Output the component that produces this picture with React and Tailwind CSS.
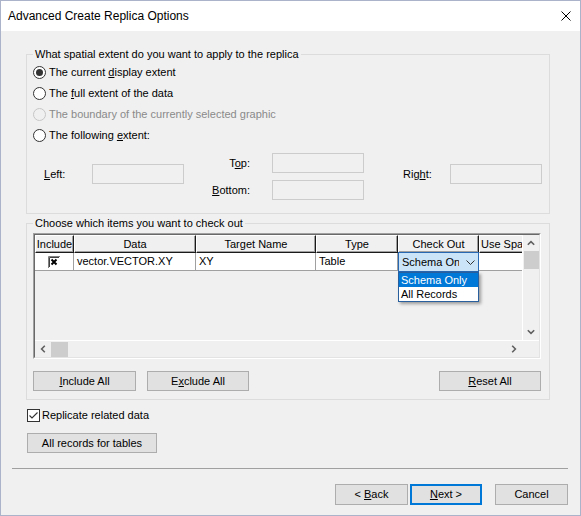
import React from 'react';

function Radio({ checked, disabled }) {
  const stroke = disabled ? '#c6c6c6' : '#333333';
  return (
    <svg width="13" height="13" viewBox="0 0 13 13" className="shrink-0">
      <circle cx="6.5" cy="6.5" r="6" fill={disabled ? 'none' : '#ffffff'} stroke={stroke} />
      {checked && <circle cx="6.5" cy="6.5" r="3.5" fill="#333333" />}
    </svg>
  );
}

function Chevron({ dir }) {
  const paths = {
    up: 'M0.8 4.8 4 1.6 7.2 4.8',
    down: 'M0.8 1.2 4 4.4 7.2 1.2',
    left: 'M4.8 0.8 1.6 4 4.8 7.2',
    right: 'M1.2 0.8 4.4 4 1.2 7.2',
  };
  const vertical = dir === 'up' || dir === 'down';
  return (
    <svg width={vertical ? 8 : 6} height={vertical ? 6 : 8} viewBox={vertical ? '0 0 8 6' : '0 0 6 8'}>
      <path d={paths[dir]} fill="none" stroke="#606060" strokeWidth="1.6" />
    </svg>
  );
}

function Field({ w = 'w-[92px]' }) {
  return <div className={`${w} h-[20px] border border-[#cccccc] bg-[#f0f0f0] shrink-0`} />;
}

function Button({ children, className = '' }) {
  return (
    <div className={`h-[20px] border border-[#adadad] bg-[#e1e1e1] flex items-center justify-center shrink-0 ${className}`}>
      <span className="whitespace-pre">{children}</span>
    </div>
  );
}

const headerCells = [
  { label: 'Include', cls: 'w-[39px] justify-center' },
  { label: 'Data', cls: 'w-[122px] justify-center' },
  { label: 'Target Name', cls: 'w-[120px] justify-center' },
  { label: 'Type', cls: 'w-[82px] justify-center' },
  { label: 'Check Out', cls: 'w-[81px] justify-center' },
  { label: 'Use Spatial Filter', cls: 'w-[120px] justify-start pl-[1px]' },
];

export default function App() {
  return (
    <div className="w-[581px] h-[516px] border border-[#aab3c9] bg-[#f0f0f0] flex flex-col font-['Liberation_Sans',Arial,sans-serif] text-[11px] text-black leading-none overflow-hidden">
      {/* title bar */}
      <div className="h-[30px] bg-white flex items-center pl-[7px] pr-[9px] shrink-0">
        <span className="text-[12px]">Advanced Create Replica Options</span>
        <svg className="ml-auto" width="10" height="10" viewBox="0 0 10 10">
          <path d="M0.5 0.5 9.5 9.5 M9.5 0.5 0.5 9.5" stroke="#000" strokeWidth="1" />
        </svg>
      </div>

      <div className="pl-[25px] flex flex-col items-start">
        {/* spatial extent */}
        <fieldset className="mt-[15px] w-[524px] border border-[#dcdcdc]">
          <legend className="ml-[6px] px-[2px] leading-[16px]">What spatial extent do you want to apply to the replica</legend>
          <div className="pl-[6px] pb-[13px]">
            <div className="h-[21px] flex items-center gap-[3px]">
              <Radio checked />
              <span>The current <span className="underline">d</span>isplay extent</span>
            </div>
            <div className="h-[21px] flex items-center gap-[3px]">
              <Radio />
              <span>The <span className="underline">f</span>ull extent of the data</span>
            </div>
            <div className="h-[21px] flex items-center gap-[3px] text-[#8a8a8a]">
              <Radio disabled />
              <span>The boundary of the currently selected graphic</span>
            </div>
            <div className="h-[21px] flex items-center gap-[3px]">
              <Radio />
              <span>The following <span className="underline">e</span>xtent:</span>
            </div>

            <div className="mt-[7px] flex items-start">
              <div className="mt-[11px] ml-[11px] flex items-center">
                <span className="w-[48px]"><span className="underline">L</span>eft:</span>
                <Field />
              </div>
              <div className="ml-[28px] grid grid-cols-[38px_92px] gap-x-[22px] gap-y-[7px] items-center">
                <span className="text-right">T<span className="underline">o</span>p:</span>
                <Field />
                <span className="text-right"><span className="underline">B</span>ottom:</span>
                <Field />
              </div>
              <div className="mt-[11px] ml-[39px] flex items-center">
                <span className="w-[47px]">Rig<span className="underline">h</span>t:</span>
                <Field />
              </div>
            </div>
          </div>
        </fieldset>

        {/* items to check out */}
        <fieldset className="mt-[1px] w-[524px] border border-[#dcdcdc]">
          <legend className="ml-[6px] px-[2px] leading-[16px]">Choose which items you want to check out</legend>
          <div className="pl-[6px] pt-[2px] pb-[8px]">
            <div className="w-[508px] h-[126px] border border-t-[#a0a0a0] border-l-[#a0a0a0] border-r-white border-b-white">
              <div className="h-full border border-t-[#696969] border-l-[#696969] border-r-[#e3e3e3] border-b-[#e3e3e3] flex flex-col bg-[#f0f0f0]">
                <div className="flex flex-1 min-h-0">
                  <div className="flex-1 min-w-0 overflow-hidden flex flex-col">
                    <div className="flex h-[18px] shrink-0">
                      {headerCells.map((c) => (
                        <div
                          key={c.label}
                          className={`${c.cls} shrink-0 flex items-center whitespace-nowrap overflow-hidden bg-[#f0f0f0] border border-t-white border-l-white border-r-[#1a1a1a] border-b-[#1a1a1a] shadow-[inset_-1px_-1px_0_#a0a0a0]`}
                        >
                          {c.label}
                        </div>
                      ))}
                    </div>
                    <div className="flex h-[18px] shrink-0">
                      <div className="w-[39px] shrink-0 bg-white border-r border-b border-[#a0a0a0] flex items-center justify-center">
                        <svg width="12" height="12" viewBox="0 0 12 12">
                          <rect x="0" y="0" width="12" height="12" fill="#ffffff" />
                          <path d="M0.5 12V0.5H12" stroke="#808080" fill="none" />
                          <path d="M1.5 11V1.5H11" stroke="#404040" fill="none" />
                          <path d="M3.5 3.5 8.5 8.5 M8.5 3.5 3.5 8.5" stroke="#000" strokeWidth="2" />
                        </svg>
                      </div>
                      <div className="w-[122px] shrink-0 bg-white border-r border-b border-[#a0a0a0] flex items-center pl-[3px]">vector.VECTOR.XY</div>
                      <div className="w-[120px] shrink-0 bg-white border-r border-b border-[#a0a0a0] flex items-center pl-[3px]">XY</div>
                      <div className="w-[82px] shrink-0 bg-white border-r border-b border-[#a0a0a0] flex items-center pl-[3px]">Table</div>
                      <div className="w-[81px] shrink-0 bg-white border-r border-b border-[#a0a0a0] relative">
                        <div className="absolute left-0 -top-[1px] w-[81px] h-[20px] border border-[#2867b2] bg-[#cce4f7] flex items-center pl-[3px] z-10">
                          <span className="w-[57px] overflow-hidden whitespace-nowrap">Schema Only</span>
                          <span className="ml-[7px]">
                            <svg width="9" height="5" viewBox="0 0 9 5">
                              <path d="M0.5 0.5 4.5 4.5 8.5 0.5" fill="none" stroke="#333333" />
                            </svg>
                          </span>
                        </div>
                        <div className="absolute left-0 top-[19px] w-[81px] border border-[#2a5f9e] bg-white shadow-[2px_2px_3px_rgba(0,0,0,0.35)] z-20">
                          <div className="h-[14px] bg-[#0078d7] text-white flex items-center pl-[2px]">Schema Only</div>
                          <div className="h-[14px] flex items-center pl-[2px]">All Records</div>
                        </div>
                      </div>
                      <div className="w-[120px] shrink-0 bg-white border-b border-[#a0a0a0]" />
                    </div>
                  </div>
                  {/* vertical scrollbar */}
                  <div className="w-[17px] shrink-0 flex flex-col border-l border-white">
                    <div className="h-[16px] flex items-center justify-center"><Chevron dir="up" /></div>
                    <div className="w-[15px] h-[18px] ml-[1px] bg-[#cdcdcd]" />
                    <div className="flex-1" />
                    <div className="h-[16px] flex items-center justify-center"><Chevron dir="down" /></div>
                  </div>
                </div>
                {/* horizontal scrollbar */}
                <div className="h-[17px] shrink-0 flex border-t border-white">
                  <div className="flex-1 flex items-center">
                    <div className="w-[16px] flex items-center justify-center"><Chevron dir="left" /></div>
                    <div className="w-[17px] h-[15px] bg-[#cdcdcd]" />
                    <div className="flex-1" />
                    <div className="w-[16px] flex items-center justify-center"><Chevron dir="right" /></div>
                  </div>
                  <div className="w-[17px] shrink-0" />
                </div>
              </div>
            </div>

            <div className="mt-[12px] flex pr-[8px]">
              <Button className="w-[103px]"><span className="underline">I</span>nclude All</Button>
              <Button className="w-[102px] ml-[11px]">E<span className="underline">x</span>clude All</Button>
              <Button className="w-[102px] ml-auto"><span className="underline">R</span>eset All</Button>
            </div>
          </div>
        </fieldset>

        <div className="mt-[9px] ml-[1px] flex items-center gap-[2px]">
          <svg width="13" height="13" viewBox="0 0 13 13">
            <rect x="0.5" y="0.5" width="12" height="12" fill="#ffffff" stroke="#333333" />
            <path d="M2.5 6.5 5 9 10.5 3.5" fill="none" stroke="#333333" strokeWidth="1.1" />
          </svg>
          <span>Replicate related data</span>
        </div>

        <Button className="mt-[11px] ml-[1px] w-[130px]">All records for tables</Button>
      </div>

      <div className="mt-[15px] ml-[11px] mr-[12px] h-px bg-[#a0a0a0] shrink-0" />

      <div className="mt-[15px] pr-[12px] flex justify-end">
        <Button className="w-[73px] !h-[21px]">{'< '}<span className="underline">B</span>ack</Button>
        <div className="w-[72px] h-[21px] ml-[2px] border-2 border-[#0078d7] bg-[#e1e1e1] flex items-center justify-center">
          <span className="whitespace-pre"><span className="underline">N</span>{'ext >'}</span>
        </div>
        <Button className="w-[73px] ml-[13px] !h-[21px]">Cancel</Button>
      </div>
    </div>
  );
}
